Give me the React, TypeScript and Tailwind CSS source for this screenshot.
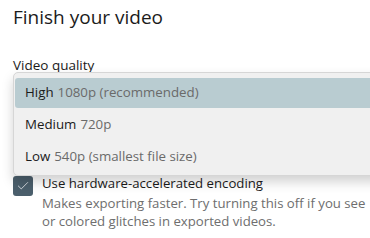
import { Check } from "lucide-react";

const options = [
  { name: "High", detail: "1080p (recommended)", active: true },
  { name: "Medium", detail: "720p", active: false },
  { name: "Low", detail: "540p (smallest file size)", active: false },
];

export default function App() {
  return (
    <div
      className="relative w-[370px] h-[238px] overflow-hidden bg-white text-[#1b1b1b]"
      style={{ fontFamily: '"Open Sans", "Noto Sans", sans-serif' }}
    >
      <div className="px-[13px]">
        <h1 className="pt-[3px] text-[19px] leading-[28px]">Finish your video</h1>

        <div className="mt-[24px] text-[13.5px] leading-[20px]">Video quality</div>

        {/* Combobox sits under the open menu */}
        <div className="h-[32px] border border-[#d0d0d0] rounded-[4px] bg-white" />

        <div className="mt-[69px] flex items-start gap-[9px]">
          <div className="w-[20px] h-[20px] shrink-0 rounded-[3px] bg-[#4b5f6c] flex items-center justify-center">
            <Check size={14} strokeWidth={1.6} className="text-[#d8dee2]" />
          </div>
          <div className="text-[13.2px] leading-[19px] -mt-[2px]">
            Use hardware-accelerated encoding
          </div>
        </div>
        <div className="ml-[29px] -mt-[2px] text-[13.2px] leading-[18px] text-[#6e6e6e] whitespace-nowrap">
          Makes exporting faster. Try turning this off if you see
          <br />
          or colored glitches in exported videos.
        </div>
      </div>

      {/* Open dropdown menu */}
      <div className="absolute left-[13px] top-[72px] w-[370px] h-[104px] bg-[#f0f0f0] border border-[#d6d6d6] rounded-l-[5px] shadow-[0_6px_12px_rgba(0,0,0,0.18)] pt-[5px] flex flex-col gap-[2px]">
        {options.map((o) => (
          <div
            key={o.name}
            className={
              o.active
                ? "ml-[1px] h-[30px] flex items-center pl-[10px] text-[13.3px] bg-[#b9ccd1] rounded-l-[3px]"
                : "ml-[1px] h-[30px] flex items-center pl-[10px] text-[13.3px]"
            }
          >
            <span className="text-[#1b1b1b]">{o.name}</span>
            <span className="ml-[4px] text-[#6a6a6a]">{o.detail}</span>
          </div>
        ))}
      </div>
    </div>
  );
}
